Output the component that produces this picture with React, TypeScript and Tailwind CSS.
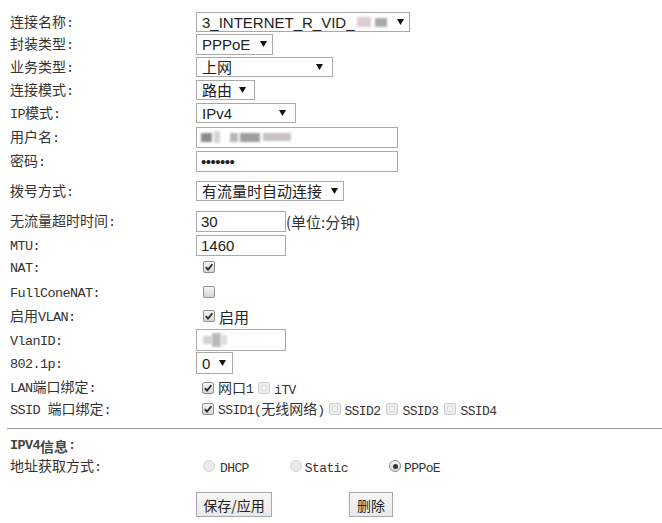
import type { ReactNode } from "react";

const MONO = "font-['Liberation_Mono',monospace] text-[13.5px] tracking-[-0.6px]";
const MONO_SM = "font-['Liberation_Mono',monospace] text-[13px] tracking-[-0.6px]";

function M({ children, small = false }: { children: ReactNode; small?: boolean }) {
	return <span className={small ? MONO_SM : MONO}>{children}</span>;
}

function Arrow() {
	return (
		<svg width="7" height="6" viewBox="0 0 7 6" className="shrink-0">
			<polygon points="0,0 7,0 3.5,6" fill="#111" />
		</svg>
	);
}

function Row({
	label,
	className,
	children,
}: {
	label: ReactNode;
	className: string;
	children?: ReactNode;
}) {
	return (
		<div className={`flex items-center ${className}`}>
			<div className="w-[196px] shrink-0 whitespace-nowrap pl-[10px] text-[14px] leading-none text-[#333]">
				{label}
			</div>
			<div className="flex items-center">{children}</div>
		</div>
	);
}

function Select({ className, children }: { className: string; children: ReactNode }) {
	return (
		<div
			className={`flex items-center justify-between border border-[#a9a9a9] bg-white pl-[5px] pr-[5px] font-['Liberation_Sans','Noto_Sans_CJK_SC',sans-serif] text-[15px] leading-none text-[#222] ${className}`}
		>
			<span className="flex items-center whitespace-nowrap">{children}</span>
			<Arrow />
		</div>
	);
}

function Input({ className, children }: { className: string; children?: ReactNode }) {
	return (
		<div
			className={`flex items-center border border-[#a9a9a9] bg-white pl-[4px] font-['Liberation_Sans',sans-serif] text-[15px] leading-none text-[#222] ${className}`}
		>
			{children}
		</div>
	);
}

function Check({
	checked = false,
	disabled = false,
	className = "",
}: {
	checked?: boolean;
	disabled?: boolean;
	className?: string;
}) {
	if (disabled) {
		return (
			<span
				className={`flex h-[12px] w-[12px] shrink-0 items-center justify-center rounded-[2px] border border-[#cfcfcf] bg-[#ededed] ${className}`}
			>
				<span className="h-[6px] w-[6px] rounded-[1px] border border-[#dadada] bg-[#f4f4f4]" />
			</span>
		);
	}
	return (
		<span
			className={`flex h-[12px] w-[12px] shrink-0 items-center justify-center rounded-[2px] border border-[#8f8f8f] bg-linear-to-b from-[#f6f6f6] to-[#d6d6d6] ${className}`}
		>
			{checked ? (
				<svg width="10" height="10" viewBox="0 0 10 10">
					<path d="M1.8 5.2 L4 7.6 L8.4 2.2" fill="none" stroke="#2a2a2a" strokeWidth="1.8" />
				</svg>
			) : null}
		</span>
	);
}

function Radio({
	checked = false,
	disabled = false,
	className = "",
}: {
	checked?: boolean;
	disabled?: boolean;
	className?: string;
}) {
	return (
		<span
			className={`flex h-[12px] w-[12px] shrink-0 items-center justify-center rounded-full border ${
				disabled
					? "border-[#d3d3d3] bg-[#ececec]"
					: "border-[#8f8f8f] bg-linear-to-b from-[#f6f6f6] to-[#d8d8d8]"
			} ${className}`}
		>
			{checked ? <span className="h-[5px] w-[5px] rounded-full bg-[#333]" /> : null}
		</span>
	);
}

function Blur({ className }: { className: string }) {
	return <span className={`inline-block blur-[1.2px] ${className}`} />;
}

function Button({ className, children }: { className: string; children: ReactNode }) {
	return (
		<div
			className={`flex h-[25px] items-center justify-center border border-[#a9a9a9] bg-linear-to-b from-[#f7f7f7] to-[#e9e9e9] text-[14px] leading-none text-[#222] ${className}`}
		>
			{children}
		</div>
	);
}

export default function App() {
	return (
		<div className="min-h-[523px] w-[662px] bg-white pt-[11px] font-['Noto_Sans_CJK_SC',sans-serif]">
			<Row label={<>连接名称<M>:</M></>} className="h-[22px]">
				<Select className="h-[20px] w-[214px]">
					3_INTERNET_R_VID_
					<Blur className="ml-[2px] h-[10px] w-[14px] bg-[#dccdd3]" />
					<Blur className="ml-[4px] h-[9px] w-[12px] bg-[#a9aba9]" />
				</Select>
			</Row>
			<Row label={<>封装类型<M>:</M></>} className="h-[22px]">
				<Select className="h-[21px] w-[77px]">PPPoE</Select>
			</Row>
			<Row label={<>业务类型<M>:</M></>} className="mt-[1px] h-[22px]">
				<Select className="h-[20px] w-[137px] pr-[9px]">上网</Select>
			</Row>
			<Row label={<>连接模式<M>:</M></>} className="mt-[1px] h-[22px]">
				<Select className="h-[20px] w-[59px] pr-[8px]">路由</Select>
			</Row>
			<Row label={<><M>IP</M>模式<M>:</M></>} className="mt-[1px] h-[22px]">
				<Select className="h-[20px] w-[100px] pr-[9px]">IPv4</Select>
			</Row>
			<Row label={<>用户名<M>:</M></>} className="mt-[2px] h-[22px]">
				<Input className="h-[21px] w-[202px]">
					<Blur className="h-[9px] w-[11px] bg-[#8c8c8c]" />
					<Blur className="ml-[2px] h-[12px] w-[6px] bg-[#d4d4d4]" />
					<Blur className="ml-[10px] h-[9px] w-[8px] bg-[#b7b7b7]" />
					<Blur className="ml-[2px] h-[9px] w-[20px] bg-[#9d9d9d]" />
					<Blur className="ml-[3px] h-[8px] w-[28px] bg-[#c9c2c2]" />
				</Input>
			</Row>
			<Row label={<>密码<M>:</M></>} className="mt-[2px] h-[22px]">
				<Input className="h-[21px] w-[202px] text-[12px] tracking-[-0.5px]">•••••••</Input>
			</Row>
			<Row label={<>拨号方式<M>:</M></>} className="mt-[8px] h-[22px]">
				<Select className="h-[20px] w-[148px]">有流量时自动连接</Select>
			</Row>
			<Row label={<>无流量超时时间<M>:</M></>} className="mt-[8px] h-[22px]">
				<Input className="h-[21px] w-[90px]">30</Input>
				<span className="text-[15px] leading-none text-[#333]">(单位:分钟)</span>
			</Row>
			<Row label={<M>MTU:</M>} className="mt-[2px] h-[22px]">
				<Input className="h-[21px] w-[90px]">1460</Input>
			</Row>
			<Row label={<M>NAT:</M>} className="h-[22px]">
				<Check checked className="ml-[7px]" />
			</Row>
			<Row label={<M>FullConeNAT:</M>} className="mt-[3px] h-[22px]">
				<Check className="ml-[7px]" />
			</Row>
			<Row label={<>启用<M>VLAN:</M></>} className="mt-[2px] h-[22px]">
				<Check checked className="ml-[7px] mr-[4px]" />
				<span className="text-[15px] leading-none text-[#222]">启用</span>
			</Row>
			<Row label={<M>VlanID:</M>} className="mt-[2px] h-[22px]">
				<Input className="h-[22px] w-[90px] pl-[6px]">
					<Blur className="h-[8px] w-[9px] bg-[#d2d2d2]" />
					<Blur className="h-[14px] w-[9px] bg-[#b9b9b9]" />
					<Blur className="h-[10px] w-[6px] bg-[#dedede]" />
				</Input>
			</Row>
			<Row label={<M>802.1p:</M>} className="mt-[1px] h-[22px]">
				<Select className="h-[22px] w-[37px] pr-[6px]">0</Select>
			</Row>
			<Row label={<><M>LAN</M>端口绑定<M>:</M></>} className="mt-[3px] h-[21px]">
				<Check checked className="ml-[6px] mr-[4px]" />
				<span className="text-[14px] leading-none text-[#333]">
					网口<M small>1</M>
				</span>
				<Check disabled className="ml-[5px] mr-[4px]" />
				<span className="leading-none text-[#333]">
					<M small>iTV</M>
				</span>
			</Row>
			<Row label={<><M>SSID </M>端口绑定<M>:</M></>} className="h-[22px]">
				<Check checked className="ml-[6px] mr-[4px]" />
				<span className="text-[14px] leading-none text-[#333]">
					<M small>SSID1(</M>无线网络<M small>)</M>
				</span>
				<Check disabled className="ml-[5px] mr-[3px]" />
				<span className="leading-none text-[#333]">
					<M small>SSID2</M>
				</span>
				<Check disabled className="ml-[6px] mr-[4px]" />
				<span className="leading-none text-[#333]">
					<M small>SSID3</M>
				</span>
				<Check disabled className="ml-[6px] mr-[4px]" />
				<span className="leading-none text-[#333]">
					<M small>SSID4</M>
				</span>
			</Row>

			<div className="ml-[7px] mt-[8px] border-t border-[#9a9a9a]" />

			<div className="mt-[7px] flex h-[19px] items-center pl-[10px] text-[14px] font-bold leading-none text-[#444]">
				<M>IPV4</M>信息<M>:</M>
			</div>
			<Row label={<>地址获取方式<M>:</M></>} className="mt-[1px] h-[20px]">
				<Radio disabled className="ml-[7px] mr-[5px]" />
				<span className="leading-none text-[#333]">
					<M small>DHCP</M>
				</span>
				<Radio disabled className="ml-[41px] mr-[3px]" />
				<span className="leading-none text-[#333]">
					<M small>Static</M>
				</span>
				<Radio checked className="ml-[41px] mr-[3px]" />
				<span className="leading-none text-[#333]">
					<M small>PPPoE</M>
				</span>
			</Row>

			<div className="mt-[16px] flex pl-[196px]">
				<Button className="w-[76px]">保存/应用</Button>
				<Button className="ml-[77px] w-[44px]">删除</Button>
			</div>
		</div>
	);
}
